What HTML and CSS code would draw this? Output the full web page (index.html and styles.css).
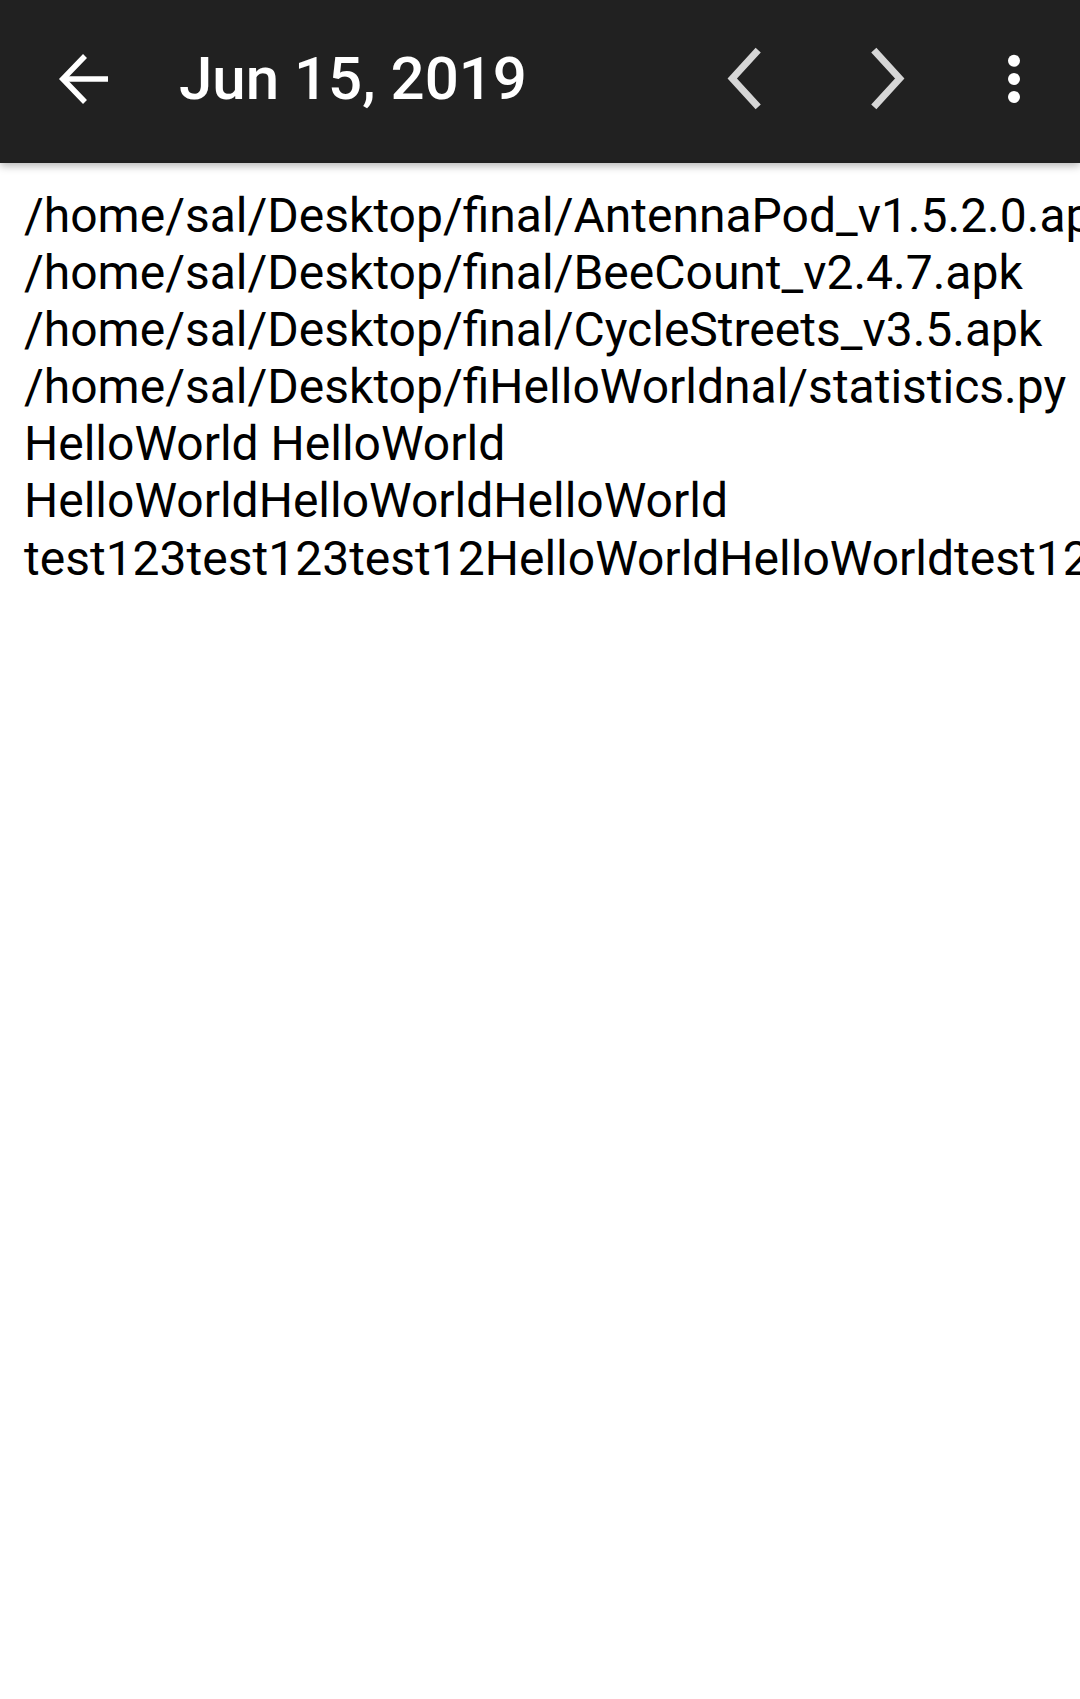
FILE: index.html
```html
<!DOCTYPE html>
<html lang="en">
<head>
<meta charset="utf-8">
<title>Jun 15, 2019</title>
<link rel="stylesheet" href="styles.css">
</head>
<body>
<div class="app">
  <header class="toolbar">
    <svg class="icon icon-back" viewBox="0 0 64 64" aria-label="Back">
      <path d="M33 9 L10.8 32 L33 55" fill="none" stroke="#ffffff" stroke-width="5.5" stroke-linejoin="miter"/>
      <path d="M12 32 H56" fill="none" stroke="#ffffff" stroke-width="5.5"/>
    </svg>
    <h1 class="title">Jun 15, 2019</h1>
    <div class="actions">
      <svg class="icon icon-chev" viewBox="0 0 64 64" aria-label="Previous">
        <path d="M46.2 3.2 L20.3 31.5 L46.2 59.8" fill="none" stroke="#d6d6d6" stroke-width="7" stroke-linejoin="miter"/>
      </svg>
      <svg class="icon icon-chev" viewBox="0 0 64 64" aria-label="Next">
        <path d="M17.8 3.2 L43.7 31.5 L17.8 59.8" fill="none" stroke="#d6d6d6" stroke-width="7" stroke-linejoin="miter"/>
      </svg>
      <svg class="icon icon-more" viewBox="0 0 32 64" aria-label="More">
        <circle cx="16" cy="13.7" r="6" fill="#ffffff"/>
        <circle cx="16" cy="32" r="6" fill="#ffffff"/>
        <circle cx="16" cy="50" r="6" fill="#ffffff"/>
      </svg>
    </div>
  </header>
  <main class="content">
    <div class="line">/home/sal/Desktop/final/AntennaPod_v1.5.2.0.apk</div>
    <div class="line">/home/sal/Desktop/final/BeeCount_v2.4.7.apk</div>
    <div class="line">/home/sal/Desktop/final/CycleStreets_v3.5.apk</div>
    <div class="line">/home/sal/Desktop/fiHelloWorldnal/statistics.py</div>
    <div class="line">HelloWorld HelloWorld</div>
    <div class="line">HelloWorldHelloWorldHelloWorld</div>
    <div class="line">test123test123test12HelloWorldHelloWorldtest123</div>
  </main>
</div>
</body>
</html>
```
FILE: styles.css
```css
* { box-sizing: border-box; }
html, body {
  margin: 0;
  padding: 0;
  background: #ffffff;
}
body {
  width: 1080px;
  height: 1699px;
  overflow: hidden;
  font-family: Roboto, "Noto Sans", "Liberation Sans", sans-serif;
}
.app {
  width: 1080px;
  height: 1699px;
  overflow: hidden;
  background: #ffffff;
}
.toolbar {
  position: relative;
  z-index: 1;
  height: 163px;
  background: #212121;
  display: flex;
  align-items: center;
  padding: 0 50px 5px 52px;
  box-shadow: 0 3px 8px rgba(0, 0, 0, 0.28);
}
.icon {
  display: block;
  flex: none;
  height: 64px;
}
.icon-back {
  width: 64px;
  margin-right: 63px;
}
.title {
  flex: 1;
  margin: 0;
  color: #ffffff;
  font-family: Roboto, "Noto Sans", sans-serif;
  font-weight: 500;
  font-size: 60px;
  line-height: 64px;
  white-space: nowrap;
}
.actions {
  display: flex;
  align-items: center;
}
.icon-chev {
  width: 64px;
}
.icon-chev + .icon-chev {
  margin-left: 80px;
}
.icon-more {
  width: 32px;
  margin-left: 78px;
}
.content {
  padding: 24px 0 0 24px;
  color: #000000;
  font-family: Roboto, "Noto Sans", sans-serif;
  font-size: 48px;
  line-height: 57.1px;
  overflow: hidden;
}
.line {
  white-space: pre;
}
```
